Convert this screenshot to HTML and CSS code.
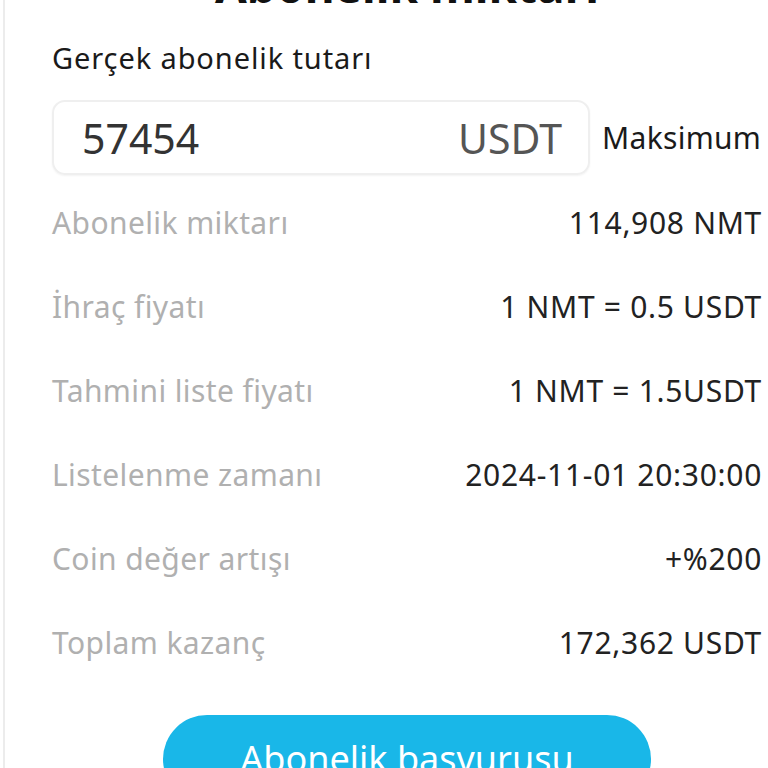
FILE: index.html
```html
<!DOCTYPE html>
<html lang="tr">
<head>
<meta charset="utf-8">
<link rel="stylesheet" href="styles.css">
</head>
<body>
<div class="panel">
  <div class="title">Abonelik miktarı</div>
  <div class="field-label">Gerçek abonelik tutarı</div>
  <div class="input-row">
    <div class="input-box">
      <span class="input-value">57454</span>
      <span class="input-unit">USDT</span>
    </div>
    <span class="max">Maksimum</span>
  </div>
  <div class="rows">
    <div class="row"><span class="lbl">Abonelik miktarı</span><span class="val">114,908 NMT</span></div>
    <div class="row"><span class="lbl">İhraç fiyatı</span><span class="val">1 NMT = 0.5 USDT</span></div>
    <div class="row"><span class="lbl">Tahmini liste fiyatı</span><span class="val">1 NMT = 1.5USDT</span></div>
    <div class="row"><span class="lbl">Listelenme zamanı</span><span class="val">2024-11-01 20:30:00</span></div>
    <div class="row"><span class="lbl">Coin değer artışı</span><span class="val">+%200</span></div>
    <div class="row"><span class="lbl">Toplam kazanç</span><span class="val">172,362 USDT</span></div>
  </div>
  <div class="btn-wrap">
    <div class="btn">Abonelik başvurusu</div>
  </div>
</div>
</body>
</html>
```
FILE: styles.css
```css
html, body {
  margin: 0;
  padding: 0;
  background: #ffffff;
  overflow: hidden;
}
body {
  font-family: "Noto Sans", "Open Sans", sans-serif;
  width: 768px;
  height: 768px;
}
.panel {
  display: flow-root;
  margin-left: 3px;
  border-left: 2px solid #ececec;
  padding: 0 6px 0 47px;
  height: 768px;
  box-sizing: border-box;
}
.title {
  margin-top: -42px;
  height: 54px;
  line-height: 54px;
  font-size: 46px;
  font-weight: 700;
  text-align: center;
  color: #111;
  white-space: nowrap;
}
.field-label {
  margin-top: 26px;
  height: 40px;
  line-height: 40px;
  font-size: 29px;
  color: #1a1a1a;
  letter-spacing: 0.9px;
}
.input-row {
  margin-top: 22px;
  display: flex;
  align-items: center;
  gap: 12px;
}
.input-box {
  flex: 0 0 538px;
  height: 75px;
  box-sizing: border-box;
  border: 2px solid #efefef;
  border-radius: 13px;
  display: flex;
  align-items: center;
  justify-content: space-between;
  padding: 0 26px 0 28px;
  box-shadow: 0 1px 2px rgba(0,0,0,0.05);
}
.input-value {
  font-size: 41px;
  color: #333;
}
.input-unit {
  font-size: 41px;
  color: #555;
}
.max {
  font-size: 30px;
  color: #1a1a1a;
  letter-spacing: 0.3px;
  white-space: nowrap;
}
.rows {
  margin-top: 5px;
}
.row {
  height: 84px;
  display: flex;
  align-items: center;
  justify-content: space-between;
}
.lbl {
  font-size: 30px;
  color: #b0b0b0;
  letter-spacing: 0.4px;
}
.val {
  font-size: 30px;
  color: #222;
  letter-spacing: 0.7px;
}
.btn-wrap {
  display: flex;
  justify-content: center;
  margin-top: 31px;
}
.btn {
  width: 488px;
  height: 88px;
  border-radius: 44px;
  background: #19b7e8;
  color: #fff;
  font-size: 36px;
  text-align: center;
  line-height: 88px;
}
```
